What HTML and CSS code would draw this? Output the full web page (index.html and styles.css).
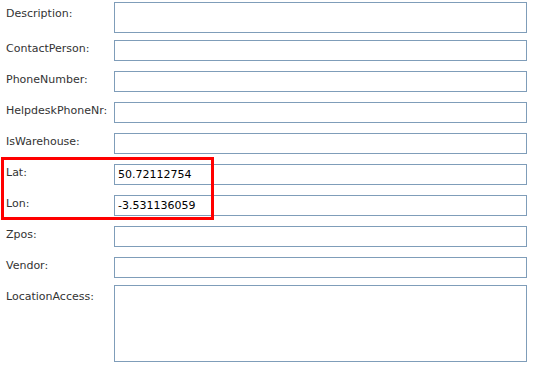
FILE: index.html
```html
<!DOCTYPE html>
<html lang="en">
<head>
    <meta charset="UTF-8">
    <meta name="viewport" content="width=device-width, initial-scale=1.0">
    <title>Location Edit</title>
    <link rel="stylesheet" href="styles.css">
</head>
<body>
    <form class="edit-form">
        <!-- Highlight round the coordinates -->
        <div class="highlight" aria-hidden="true"></div>

        <div class="row">
            <label class="label" for="description">Description:</label>
            <textarea class="field area small" id="description"></textarea>
        </div>
        <div class="row">
            <label class="label" for="contactPerson">ContactPerson:</label>
            <input class="field" type="text" id="contactPerson">
        </div>
        <div class="row">
            <label class="label" for="phoneNumber">PhoneNumber:</label>
            <input class="field" type="text" id="phoneNumber">
        </div>
        <div class="row">
            <label class="label" for="helpdeskPhoneNr">HelpdeskPhoneNr:</label>
            <input class="field" type="text" id="helpdeskPhoneNr">
        </div>
        <div class="row">
            <label class="label" for="isWarehouse">IsWarehouse:</label>
            <input class="field" type="text" id="isWarehouse">
        </div>
        <div class="row">
            <label class="label" for="lat">Lat:</label>
            <input class="field" type="text" id="lat" value="50.72112754">
        </div>
        <div class="row">
            <label class="label" for="lon">Lon:</label>
            <input class="field" type="text" id="lon" value="-3.531136059">
        </div>
        <div class="row">
            <label class="label" for="zpos">Zpos:</label>
            <input class="field" type="text" id="zpos">
        </div>
        <div class="row">
            <label class="label" for="vendor">Vendor:</label>
            <input class="field" type="text" id="vendor">
        </div>
        <div class="row">
            <label class="label" for="locationAccess">LocationAccess:</label>
            <textarea class="field area large" id="locationAccess"></textarea>
        </div>
    </form>
</body>
</html>
```

FILE: styles.css
```css
/* Page */
body {
    margin: 0;
    padding: 0;
    background: #fff;
    font-family: "DejaVu Sans", Verdana, sans-serif;
    font-size: 11px;
    color: #333;
}

/* Form */
.edit-form {
    position: relative;
    width: 536px;
}

.row {
    display: flex;
    align-items: flex-start;
}

.label {
    box-sizing: border-box;
    width: 114px;
    flex-shrink: 0;
    padding: 7px 0 0 6px;
    line-height: 13px;
    white-space: nowrap;
}

/* Inputs */
.field {
    box-sizing: border-box;
    width: 413px;
    height: 21px;
    margin: 5px 0;
    padding: 0 3px;
    border: 1px solid #7f9db9;
    border-radius: 0;
    background: #fff;
    font-family: "DejaVu Sans", Verdana, sans-serif;
    font-size: 11px;
    line-height: 13px;
    color: #000;
    outline: none;
}

.area {
    margin: 2px 0;
    resize: none;
    overflow: hidden;
}

.area.small {
    height: 31px;
}

.area.large {
    height: 77px;
}

/* Red annotation box */
.highlight {
    position: absolute;
    left: 1px;
    top: 157px;
    width: 213px;
    height: 63px;
    box-sizing: border-box;
    border: 3px solid #f00;
    pointer-events: none;
    z-index: 2;
}
```
